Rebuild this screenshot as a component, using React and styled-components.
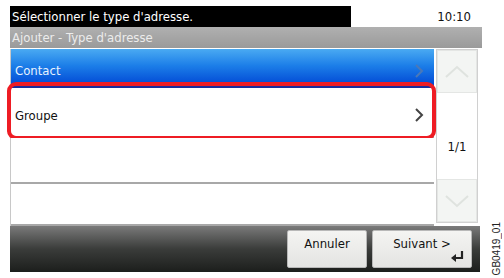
import React from 'react';
import styled, { createGlobalStyle } from 'styled-components';

const GlobalStyle = createGlobalStyle`
  html, body { margin: 0; padding: 0; background: #fff; }
  body {
    font-family: "DejaVu Sans Condensed", "DejaVu Sans", Verdana, sans-serif;
    font-stretch: condensed;
  }
`

const Page = styled.div`
  width: 504px;
  height: 278px;
  position: relative;
  background: #fff;
  overflow: hidden;
`

const Screen = styled.div`
  margin-left: 10px;
  padding-top: 6px;
  width: 472px;
  display: flex;
  flex-direction: column;
`

const Header = styled.div`
  display: flex;
  height: 21px;
  align-items: stretch;
`

const Prompt = styled.div`
  width: 341px;
  background: #000;
  color: #fff;
  font-size: 13px;
  padding-left: 2px;
  box-sizing: border-box;
  display: flex;
  align-items: center;
`

const Clock = styled.div`
  flex: 1;
  padding-right: 11px;
  font-size: 13px;
  color: #111;
  display: flex;
  align-items: center;
  justify-content: flex-end;
`

const SubTitle = styled.div`
  height: 21px;
  background: linear-gradient(#b0b0b0, #9a9a9a);
  color: #ececec;
  font-size: 13px;
  padding-left: 2px;
  display: flex;
  align-items: center;
`

const Body = styled.div`
  display: flex;
  height: 177px;
  padding-top: 1px;
`

const List = styled.div`
  width: 423px;
  display: flex;
  flex-direction: column;
  border-left: 1px solid #c8c8c8;
`

const Row = styled.div`
  position: relative;
  height: ${p => p.h}px;
  box-sizing: border-box;
  display: flex;
  align-items: center;
  justify-content: space-between;
  padding: 6px 10px 0 4px;
  font-size: 13px;
  color: ${p => (p.selected ? '#e6f2ff' : '#111')};
  background: ${p => (p.selected ? 'linear-gradient(#4aaaf2 0%, #1c7ee8 45%, #0046d4 100%)' : '#fff')};
  border-bottom: ${p => (p.selected ? '2px solid #1c2c9c' : '2px solid #a8a8a8')};

  ${p => p.highlight && `
    &::after {
      content: '';
      position: absolute;
      left: -4px;
      top: -6px;
      right: -2px;
      bottom: -4px;
      border: 4px solid #ee1c24;
      border-radius: 9px;
    }
  `}
`

const Chevron = ({ color }) => (
  <svg width="10" height="16" viewBox="0 0 10 16">
    <path d="M2 2 L8 8 L2 14" fill="none" stroke={color} strokeWidth="2" />
  </svg>
)

const Scroll = styled.div`
  margin-left: 2px;
  width: 42px;
  height: 174px;
  box-sizing: border-box;
  border: 1px solid #d0d0d0;
  display: flex;
  flex-direction: column;
`

const ScrollBtn = styled.div`
  height: 41px;
  background: #f3f5f3;
  border: 1px solid #e4e6e4;
  display: flex;
  align-items: center;
  justify-content: center;
`

const PageInfo = styled.div`
  flex: 1;
  display: flex;
  align-items: center;
  justify-content: center;
  padding-top: 20px;
  font-size: 13px;
  color: #111;
`

const Footer = styled.div`
  height: 46px;
  width: 470px;
  background: linear-gradient(#7a7a7a 0%, #3a3c3a 50%, #1c1e1c 100%);
  display: flex;
  align-items: center;
  justify-content: flex-end;
  gap: 5px;
  padding-right: 8px;
  box-sizing: border-box;
`

const Button = styled.div`
  position: relative;
  width: ${p => p.w}px;
  height: 38px;
  box-sizing: border-box;
  background: linear-gradient(#f4f4f2, #e4e4e2);
  border: 1px solid #b8b8b8;
  border-radius: 2px;
  font-size: 13px;
  color: #111;
  display: flex;
  justify-content: center;
  padding-top: 5px;
`

const EnterIcon = styled.svg`
  position: absolute;
  right: 6px;
  bottom: 4px;
`

const Code = styled.div`
  position: absolute;
  right: 2px;
  top: 222px;
  writing-mode: vertical-rl;
  transform: rotate(180deg);
  font-size: 10px;
  color: #222;
  font-family: "Liberation Sans", Arial, sans-serif;
  font-stretch: normal;
`

export default function App() {
  return (
    <Page>
      <GlobalStyle />
      <Screen>
        <Header>
          <Prompt>Sélectionner le type d'adresse.</Prompt>
          <Clock>10:10</Clock>
        </Header>
        <SubTitle>Ajouter - Type d'adresse</SubTitle>
        <Body>
          <List>
            <Row h={39} selected>
              Contact
              <Chevron color="#4a78b8" />
            </Row>
            <Row h={50} highlight>
              Groupe
              <Chevron color="#444" />
            </Row>
            <Row h={46} />
            <Row h={42} />
          </List>
          <Scroll>
            <ScrollBtn>
              <svg width="26" height="14" viewBox="0 0 26 14">
                <path d="M2 12 L13 2 L24 12" fill="none" stroke="#dfe3df" strokeWidth="2" />
              </svg>
            </ScrollBtn>
            <PageInfo>1/1</PageInfo>
            <ScrollBtn>
              <svg width="26" height="14" viewBox="0 0 26 14">
                <path d="M2 2 L13 12 L24 2" fill="none" stroke="#dfe3df" strokeWidth="2" />
              </svg>
            </ScrollBtn>
          </Scroll>
        </Body>
        <Footer>
          <Button w={80}>Annuler</Button>
          <Button w={100}>
            Suivant &gt;
            <EnterIcon width="14" height="12" viewBox="0 0 14 12">
              <path d="M11 0 V7 H3" fill="none" stroke="#222" strokeWidth="2.2" />
              <path d="M0 7 L5 3 V11 Z" fill="#222" />
            </EnterIcon>
          </Button>
        </Footer>
      </Screen>
      <Code>GB0419_01</Code>
    </Page>
  )
}
